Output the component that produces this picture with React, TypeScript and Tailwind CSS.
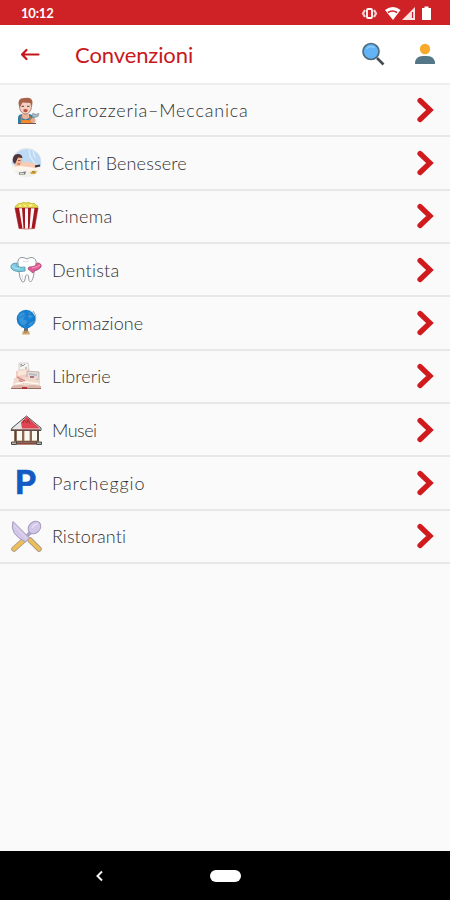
import type { ReactNode } from 'react';

// Types
interface Category {
  label: string;
  tracking: string;
  icon: ReactNode;
}

function MechanicIcon() {
  return (
    <svg className="h-8 w-8" viewBox="0 0 32 32" fill="none">
      <path d="M8 30V24q0-4 5-4h5q5 0 5 4v6z" fill="#2e7fa6" />
      <path d="M12 20h7v4l-3.500 1.500L12 24z" fill="#e9b49d" />
      <path d="M11 30v-4h10v4z" fill="#f08a2c" />
      <path d="M11.500 22v5M20 22v5" stroke="#d9772a" strokeWidth="1.500" />
      <ellipse cx="15.500" cy="12.500" rx="6" ry="7.500" fill="#f6d0c0" stroke="#8c5a50" strokeWidth=".7" />
      <path d="M9 12Q7 4 14 4q8-1.500 8.500 4l-.5 5-1.500-4-8-.5L10 13z" fill="#a9624a" />
      <path d="M11.500 12.300h2.500M17 12.300h2.500" stroke="#5a3a38" />
      <path d="M13.500 15.500q2-1 4 0v2q-2 1.500-4 0z" fill="#b84f48" />
      <path d="M22 28l3-8" stroke="#8da0a8" strokeWidth="2" />
      <path d="M22 21l1-2 2 1.500 4-1-1 3-4 1z" fill="#a9bdc4" stroke="#75868d" strokeWidth=".6" />
      <circle cx="23" cy="26.500" r="2.500" fill="#e5ac92" />
      <path d="M8 29.500h18" stroke="#7c5145" />
    </svg>
  );
}

function SpaIcon() {
  return (
    <svg className="h-8 w-8" viewBox="0 0 32 32" fill="none">
      <circle cx="16.500" cy="15.500" r="15" fill="#f0f0ec" />
      <path d="M1.700 17A15 15 0 0 1 30.500 11l.5 8-15 3z" fill="#bdd9f3" />
      <path d="M19 2l1 7 5 8M23 4l2 7" stroke="#e3effa" strokeWidth="1.200" />
      <path d="M4 19q8-5 14-4l8 2 3 1-2 3-20 .5z" fill="#f7cbb4" />
      <path d="M2 20l9-1 15 2 5-1-1 3-26 1z" fill="#fff5ec" />
      <ellipse cx="8" cy="13" rx="4.200" ry="5.500" fill="#f2b996" />
      <path d="M3 15Q2 7 8 7q4 0 4.500 4L8 10.500 5 17z" fill="#513439" />
      <path d="M8 13.500h2.500M7.500 17h2.500" stroke="#a25149" />
      <path d="M25 19.500l5-1" stroke="#303746" strokeWidth="1.800" />
      <path d="M9 25.500l7-1-1 3H9z" fill="#74746f" />
      <path d="M10 26.300h4" stroke="#f5f5ef" />
      <path d="M20 25.500l4-2 3 1-2 2.500h-4z" fill="#dda83d" />
      <path d="M22 24.500l3 1" stroke="#8e7c31" />
    </svg>
  );
}

function PopcornIcon() {
  return (
    <svg className="h-8 w-8" viewBox="0 0 32 32" fill="none">
      <path d="M5.500 9Q4 6 7 5q1-2.500 4-1.500 2-2 5-.5 3-1.500 5 .5 4-1 5 1.500 3 1 1.500 4z" fill="#e5dc50" stroke="#b5ad32" strokeWidth=".7" />
      <path d="M9 6h2M14 5l2 1.500M19 6l3-1" stroke="#faf6a3" strokeWidth="1.400" />
      <path d="M5 8h23l-3.500 20.500q-8 1-15.500 0z" fill="#fffafa" stroke="#b04040" strokeWidth=".7" />
      <path d="M5 8h4l3.500 20.500H9zM12 8h3v20.500h-1.500zM18 8h3l-1.500 20.500H18zM24.500 8H28l-3.500 20.500h-3z" fill="#a51720" />
    </svg>
  );
}

function ToothIcon() {
  return (
    <svg className="h-8 w-8" viewBox="0 0 32 32" fill="none">
      <path d="M8 10Q7 3.500 12 3.500q3 0 5 1.500 2-1.500 5-1.500 5 1 4 7l-2 8q-.5 7-3.500 9.500-2 0-2-6-1.500-3-3 0-.5 7-3 6-3-3-3.500-10z" fill="#fff" stroke="#858b94" strokeWidth=".9" />
      <path d="M13 7q3 2 6 0M12 20q0 3 1 6" stroke="#d8dce2" />
      <path d="M7 9Q0 9 1 14q3 5 14 3v-4q-5 1-8-1z" fill="#7ccbe0" stroke="#4f96aa" strokeWidth=".8" />
      <path d="M2 12q3 3 8 3" stroke="#aee3f0" />
      <path d="M19 13q7 0 8-4 5 0 4 4-2 3-7 4l-1 2-5-4z" fill="#e35c98" stroke="#a64771" strokeWidth=".8" />
      <path d="M22 14q6-1 8-3" stroke="#f29bc0" />
    </svg>
  );
}

function GlobeIcon() {
  return (
    <svg className="h-8 w-8" viewBox="0 0 32 32" fill="none">
      <path d="M14 21h4v4h-4z" fill="#697078" />
      <path d="M13 24h6l1 3.500h-8z" fill="#cea76b" />
      <path d="M14 25h3" stroke="#8f7750" />
      <circle cx="16" cy="12" r="9.300" fill="#1680d3" />
      <path d="M9 8q5-5 7 0l-3 4 4 2-2 6-4-3-3-5zM19 5l4 4-3 3-2-3zM20 15l4-1-3 5-3-1z" fill="#3895d9" />
      <path d="M7 13q9-8 16-5M11 20q9-3 14-9" stroke="#196faf" strokeWidth=".7" />
      <path d="M23 4q5 6 1 13" stroke="#778590" strokeWidth=".8" />
    </svg>
  );
}

function BooksIcon() {
  return (
    <svg className="h-8 w-8" viewBox="0 0 32 32" fill="none">
      <path d="M9 3h9l1 7H9z" fill="#f6f4f1" stroke="#c5c0bc" strokeWidth=".7" />
      <path d="M11 7V4l2 2 2-2M15 8h2" stroke="#898687" strokeWidth=".9" />
      <path d="M6 11l13-2v15H6z" fill="#f1ccc1" />
      <path d="M8 11l10-1v4L8 16z" fill="#f9e7d9" />
      <path d="M17 11l12 1v11H17z" fill="#e3dad6" stroke="#b29b95" strokeWidth=".7" />
      <path d="M19 13l8 1v2l-8-1z" fill="#b8bdc5" />
      <path d="M20 17h4M22 20h6" stroke="#a34c5c" strokeWidth="1.600" />
      <path d="M4 18l12-1 14 3v7H3z" fill="#efdacd" />
      <path d="M7 17l8 4M9 20l5 3" stroke="#d98d8c" strokeWidth="1.500" />
      <path d="M5 24l11-2 13 2" stroke="#fff9ef" strokeWidth="1.500" />
      <path d="M2 26q7-2 14 0 6-2 15 0v3H1z" fill="#d8b6aa" />
      <path d="M1 28.500h30" stroke="#9b6a62" />
      <path d="M12 28h5" stroke="#b42731" strokeWidth="1.800" />
    </svg>
  );
}

function MuseumIcon() {
  return (
    <svg className="h-8 w-8" viewBox="0 0 32 32" fill="none">
      <path d="M4 15h25v13H4z" fill="#bd9275" />
      <path d="M2 14L16.500 2 31 14v2.500H1z" fill="#e4e7e6" stroke="#4b4f4e" />
      <path d="M16.500 2.500L30 14.500H12l-1-6z" fill="#e04652" />
      <path d="M13 9l1-3 3 3 1-3.500 2 4" stroke="#8b3239" strokeWidth=".9" />
      <path d="M2 16h28" stroke="#70453f" strokeWidth="1.400" />
      {/* Columns */}
      <path d="M5.500 17v10M28 17v10" stroke="#4b4641" strokeWidth="1.800" />
      <path d="M13 17v10M21 17v10" stroke="#6f5341" strokeWidth="1.300" />
      <path d="M9.500 17v9.500M17 17v9.500M24.500 17v9.500" stroke="#faf8f2" strokeWidth="5" />
      <path d="M6 28h21" stroke="#5c4439" strokeWidth="1.500" />
      <path d="M7 29.700h19" stroke="#8f4638" strokeWidth="1.900" />
      <path d="M1.500 28h5v2.500h-5zM26.500 28h5v2.500h-5z" fill="#b3b2aa" stroke="#3c3d39" strokeWidth=".9" />
    </svg>
  );
}

function CutleryIcon() {
  return (
    <svg className="h-8 w-8" viewBox="0 0 32 32" fill="none">
      <path d="M14 20L4 29" stroke="#aa9981" strokeWidth="5.500" strokeLinecap="round" />
      <path d="M14 20L4 29" stroke="#edbd5c" strokeWidth="3.800" strokeLinecap="round" />
      <path d="M14 19l8-8" stroke="#aaa0c9" strokeWidth="3.500" />
      <ellipse cx="24.500" cy="7.500" rx="5.600" ry="7" transform="rotate(45 24.500 7.500)" fill="#d2c7e9" stroke="#a49bbb" />
      <path d="M22 8q2-4 6-4" stroke="#e7def4" strokeWidth="1.500" />
      <path d="M20 20l9 9" stroke="#aa9981" strokeWidth="5.500" strokeLinecap="round" />
      <path d="M20 20l9 9" stroke="#edbd5c" strokeWidth="3.800" strokeLinecap="round" />
      <path d="M3 1.500L19.500 18l-4 4Q-1 14 3 1.500z" fill="#d2c7e9" stroke="#a49bbb" />
      <path d="M4 5l13 14" stroke="#ddd2ef" strokeWidth="1.500" />
    </svg>
  );
}

function ParkingIcon() {
  return <span className="font-[Roboto] text-[33px] leading-8 font-bold text-[#125bc4] [-webkit-text-stroke:0.6px_#125bc4]">P</span>;
}

const CATEGORIES: Category[] = [
  { label: 'Carrozzeria–Meccanica', tracking: 'tracking-[0.8px]', icon: <MechanicIcon /> },
  { label: 'Centri Benessere', tracking: 'tracking-[0.15px]', icon: <SpaIcon /> },
  { label: 'Cinema', tracking: 'tracking-[0.3px]', icon: <PopcornIcon /> },
  { label: 'Dentista', tracking: 'tracking-[0.25px]', icon: <ToothIcon /> },
  { label: 'Formazione', tracking: 'tracking-[0.1px]', icon: <GlobeIcon /> },
  { label: 'Librerie', tracking: 'tracking-[0.1px]', icon: <BooksIcon /> },
  { label: 'Musei', tracking: 'tracking-[-0.5px]', icon: <MuseumIcon /> },
  { label: 'Parcheggio', tracking: 'tracking-[0.85px]', icon: <ParkingIcon /> },
  { label: 'Ristoranti', tracking: 'tracking-[0.05px]', icon: <CutleryIcon /> },
];

function StatusBar() {
  return (
    <div className="flex h-[25px] shrink-0 items-center justify-between bg-[#cf2226] pr-[17px] pl-[21px] text-white">
      <span className="pt-px font-[Lato] text-[13px] leading-none font-bold tracking-[-0.2px]">10:12</span>
      <svg className="mt-px h-[17px] w-[72px]" viewBox="0 0 72 17" fill="none">
        {/* Vibrate */}
        <rect x="6" y="4" width="5" height="9" rx="1" stroke="#fff" strokeWidth="1.800" />
        <path d="M4 5L2 8.500 4 12M13 5l2 3.500-2 3.500" stroke="#fbd0d0" strokeWidth="2.200" />
        {/* Wifi */}
        <path d="M24 5q8-6 15.500 0l-7.500 10z" fill="#fff" />
        <path d="M27 7.500q4.500-3 9 0" stroke="#cf2226" strokeWidth="1.600" />
        {/* Signal */}
        <path d="M54 2v13H41z" fill="#fde4e4" />
        <path d="M51.500 7v6" stroke="#cf2226" strokeWidth="1.200" />
        {/* Battery */}
        <path d="M61 3h2.500V1.500h4V3H70v12h-9z" fill="#fff" />
      </svg>
    </div>
  );
}

function Header() {
  return (
    <header className="flex h-[58px] shrink-0 items-center bg-white pr-[14px] pl-5">
      <button type="button" aria-label="Indietro">
        <svg className="h-[14px] w-5" viewBox="0 0 20 14" fill="none" stroke="#c5161b" strokeWidth="2.200" strokeLinecap="round" strokeLinejoin="round">
          <path d="M18.500 7.500H2M6.500 3L2 7.500 6.500 12" />
        </svg>
      </button>
      <h1 className="mt-px ml-[35px] font-[Lato] text-[22px] leading-none tracking-[-0.1px] text-[#c9171d]">Convenzioni</h1>
      <button type="button" aria-label="Cerca" className="ml-auto">
        <svg className="h-6 w-6" viewBox="0 0 24 24" fill="none">
          <path d="M16 16l6.500 6.500" stroke="#454d52" strokeWidth="2.600" />
          <circle cx="10" cy="9.500" r="8" fill="#61b3f5" stroke="#506b7c" strokeWidth="1.700" />
          <path d="M6 6.500q3-3.500 7-1" stroke="#8ccafa" strokeWidth="1.600" strokeLinecap="round" />
        </svg>
      </button>
      <button type="button" aria-label="Profilo" className="ml-[29px]">
        <svg className="h-[22px] w-[22px]" viewBox="0 0 22 22">
          <circle cx="11" cy="6" r="5.200" fill="#faaa2b" />
          <path d="M1 21q0-8 8-8h4q8 0 8 8z" fill="#537786" />
        </svg>
      </button>
    </header>
  );
}

function CategoryRow({ label, tracking, icon }: Category) {
  return (
    <li className="flex h-[53.33px] items-center border-b-2 border-[#e7e7e7] pr-4 pl-[10px]">
      <span className="flex w-8 shrink-0 items-center justify-center">{icon}</span>
      <span className={`ml-[10px] font-[Lato] text-[18px] leading-none font-light text-[#303030] ${tracking}`}>{label}</span>
      <svg className="ml-auto h-[26px] w-[18px] shrink-0" viewBox="0 0 18 26" fill="none">
        <path d="M4 3.500L14 13 4 22.500" stroke="#d01a1e" strokeWidth="5.200" strokeLinecap="round" strokeLinejoin="miter" />
      </svg>
    </li>
  );
}

function NavigationBar() {
  return (
    <nav className="flex h-[49px] shrink-0 items-center bg-black pl-[95px]">
      <svg className="h-3 w-[9px]" viewBox="0 0 9 12" fill="none">
        <path d="M7 1.500L2.500 6 7 10.500" stroke="#f1f1f1" strokeWidth="2" />
      </svg>
      <span className="ml-[106px] h-3 w-[31px] rounded-full bg-white" />
    </nav>
  );
}

export default function App() {
  return (
    <div className="flex h-[900px] w-[450px] flex-col overflow-hidden bg-[#fafafa]">
      <StatusBar />
      <Header />
      <main className="flex-1 border-t-2 border-[#eeeeee]">
        <ul className="-mt-px">
          {CATEGORIES.map((category) => (
            <CategoryRow key={category.label} {...category} />
          ))}
        </ul>
      </main>
      <NavigationBar />
    </div>
  );
}
